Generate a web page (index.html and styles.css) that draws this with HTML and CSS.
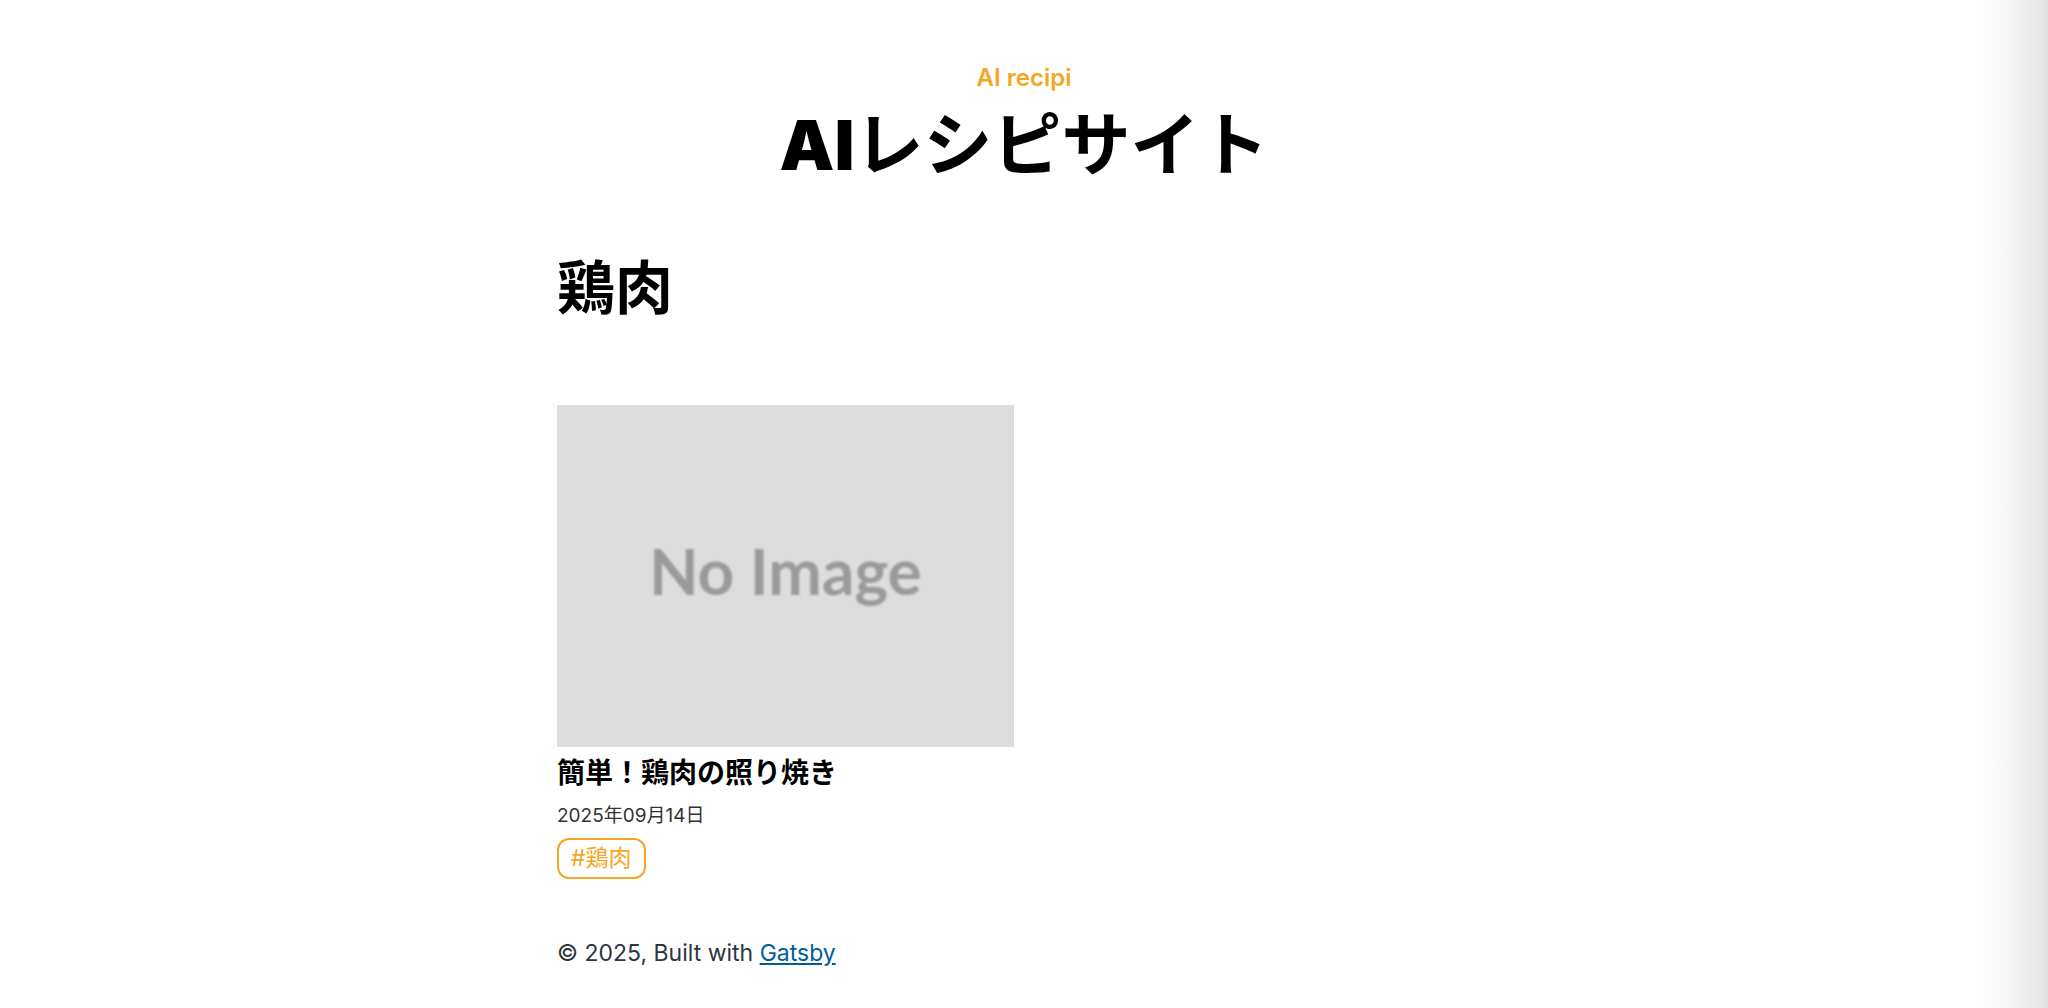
FILE: index.html
```html
<!DOCTYPE html>
<html lang="ja">
<head>
<meta charset="utf-8">
<title>AIレシピサイト</title>
<link rel="stylesheet" href="styles.css">
</head>
<body>
<div class="wrapper">
  <header class="global-header">
    <p class="brand">AI recipi</p>
    <h1 class="site-title"><span class="site-title-ai">AI</span>レシピサイト</h1>
  </header>
  <main class="main">
    <h2 class="category">鶏肉</h2>
    <ul class="post-list">
      <li class="post-card">
        <div class="thumb"><span class="thumb-text">No Image</span></div>
        <h3 class="post-title">簡単！鶏肉の照り焼き</h3>
        <p class="post-date">2025年09月14日</p>
        <div class="tags"><span class="tag">#鶏肉</span></div>
      </li>
    </ul>
  </main>
  <footer class="footer">© 2025, Built with <a class="footer-link" href="#">Gatsby</a></footer>
</div>
</body>
</html>
```

FILE: styles.css
```css
html {
  background: linear-gradient(to right, #ffffff 0, #ffffff 1975px, #f6f6f6 2010px, #e8e8e8 2040px, #dedede 2048px);
  min-height: 100%;
}
body {
  margin: 0;
  font-family: Inter, "Noto Sans CJK JP", sans-serif;
  color: #2e353f;
}
.wrapper {
  width: 934px;
  margin: 0 auto;
  padding-top: 64px;
}
.global-header {
  text-align: center;
}
.brand {
  margin: 0;
  font-size: 24px;
  line-height: 28px;
  font-weight: 600;
  color: #f5a623;
}
.site-title {
  margin: 13px 0 0;
  font-size: 69px;
  line-height: 80px;
  font-weight: 700;
  color: #000;
}
.site-title-ai {
  font-weight: 900;
}
.category {
  margin: 68px 0 0;
  font-size: 58px;
  line-height: 70px;
  font-weight: 700;
  color: #000;
}
.post-list {
  list-style: none;
  margin: 82px 0 0;
  padding: 0;
  display: flex;
}
.post-card {
  width: 457px;
  display: flex;
  flex-direction: column;
  align-items: flex-start;
}
.thumb {
  width: 457px;
  height: 342px;
  background: #dddddd;
  display: flex;
  align-items: center;
  justify-content: center;
}
.thumb-text {
  font-family: Lato, "Open Sans", sans-serif;
  font-weight: 700;
  font-size: 64px;
  line-height: 1;
  color: #9a9a9a;
  filter: blur(1px);
  margin-top: -10px;
}
.post-title {
  margin: 8px 0 0;
  font-size: 28px;
  line-height: 36px;
  font-weight: 700;
  color: #000;
}
.post-date {
  margin: 12px 0 0;
  font-size: 19px;
  line-height: 26px;
  color: #333;
}
.tags {
  margin-top: 9px;
  display: flex;
  gap: 8px;
}
.tag {
  display: inline-block;
  border: 2px solid #f5a623;
  border-radius: 12px;
  padding: 0 12px;
  font-size: 23px;
  line-height: 37px;
  color: #f5a623;
}
.footer {
  margin-top: 58px;
  font-size: 23px;
  line-height: 32px;
  color: #2e353f;
}
.footer-link {
  color: #005b99;
}
```
